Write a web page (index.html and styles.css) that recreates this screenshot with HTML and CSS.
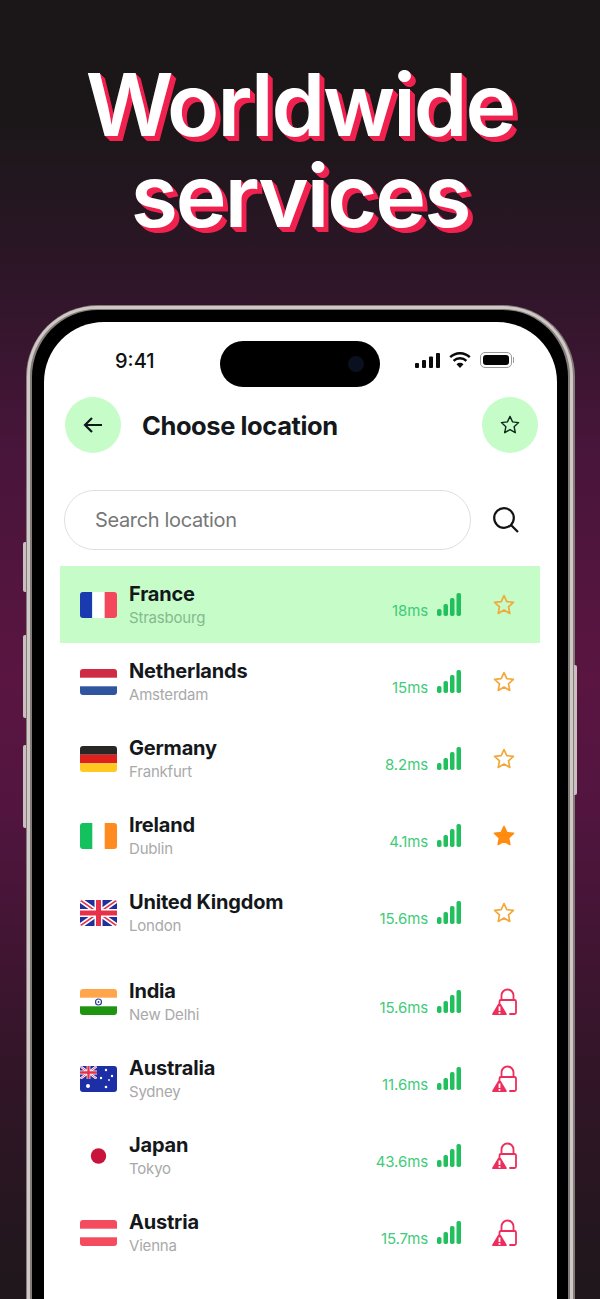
FILE: index.html
```html
<!DOCTYPE html>
<html>
  <head>
    <meta charset="utf-8">
    <link rel="stylesheet" href="styles.css">
    <title>Worldwide services</title>
  </head>
  <body>
    <svg class="sprite" width="0" height="0">
      <symbol id="star" viewBox="0 0 24 24">
        <path d="M12 2.600l2.800 6 6.600.8-4.900 4.500 1.300 6.500-5.800-3.300-5.800 3.300 1.300-6.500-4.900-4.500 6.600-.8z" stroke-linejoin="round"/>
      </symbol>
      <symbol id="lock" viewBox="0 0 26 28">
        <path d="M10.500 12V7.500a6 6 0 0 1 12 0V12" fill="none" stroke="currentColor" stroke-width="1.800"/>
        <path d="M8.500 14.500V13.500q0-1.500 1.500-1.500h13.500q1.500 0 1.500 1.500v11q0 1.500-1.500 1.500H19" fill="none" stroke="currentColor" stroke-width="1.800" stroke-linecap="round"/>
        <path d="M8.500 15q.8 0 1.200.8l6 10q.5 1.200-.8 1.200H2q-1.300 0-.8-1.200l6-10q.4-.8 1.300-.8z" fill="currentColor"/>
        <rect x="7.600" y="18.500" width="1.800" height="4.500" fill="#fff"/>
        <rect x="7.600" y="24" width="1.800" height="1.800" fill="#fff"/>
      </symbol>
      <symbol id="bars" viewBox="0 0 24 23">
        <rect class="b1" x="0" y="16" width="4.500" height="7" rx="1.800"/>
        <rect class="b2" x="6.500" y="11" width="4.500" height="12" rx="1.800"/>
        <rect class="b3" x="13" y="5" width="4.500" height="18" rx="1.800"/>
        <rect class="b4" x="19.500" y="0" width="4.500" height="23" rx="1.800"/>
      </symbol>
      <symbol id="union" viewBox="0 0 37 26">
        <rect width="37" height="26" fill="#1f2f9e"/>
        <path d="M0 0L37 26M37 0L0 26" stroke="#fff" stroke-width="5"/>
        <path d="M0 0L37 26M37 0L0 26" stroke="#e8304a" stroke-width="1.600"/>
        <path d="M18.500 0V26M0 13H37" stroke="#fff" stroke-width="8"/>
        <path d="M18.500 0V26M0 13H37" stroke="#e8304a" stroke-width="5"/>
      </symbol>
    </svg>

    <div class="hero">
      <h1>Worldwide<br>services</h1>
    </div>

    <div class="phone">
      <span class="side-btn btn-a"></span>
      <span class="side-btn btn-b"></span>
      <span class="side-btn btn-c"></span>
      <span class="side-btn btn-d"></span>
      <div class="screen">
        <div class="status">
          <span class="time">9:41</span>
          <div class="island"><span class="camera"></span></div>
          <div class="status-icons">
            <svg width="25" height="15" viewBox="0 0 25 15" fill="#0b0b0b">
              <rect x="0" y="10" width="4" height="5" rx="1"/>
              <rect x="7" y="7" width="4" height="8" rx="1"/>
              <rect x="14" y="3.500" width="4" height="11.500" rx="1"/>
              <rect x="21" y="0" width="4" height="15" rx="1"/>
            </svg>
            <svg width="22" height="16" viewBox="0 0 22 16" fill="none" stroke="#0b0b0b" stroke-width="2.400">
              <path d="M1.200 5.200a14 14 0 0 1 19.600 0"/>
              <path d="M4.600 8.800a9.200 9.200 0 0 1 12.800 0"/>
              <path d="M11 16l-3.500-3.700a5 5 0 0 1 7 0z" fill="#0b0b0b" stroke="none"/>
            </svg>
            <div class="battery"><span></span></div>
          </div>
        </div>

        <div class="top-bar">
          <div class="round-btn">
            <svg width="20" height="18" viewBox="0 0 20 18" fill="none" stroke="#11181c" stroke-width="2.200">
              <path d="M19 9H2M9 2L2 9l7 7"/>
            </svg>
          </div>
          <div class="title">Choose location</div>
          <div class="round-btn">
            <svg class="star-head" width="22" height="22"><use href="#star"/></svg>
          </div>
        </div>

        <div class="search-row">
          <div class="search-box">Search location</div>
          <svg width="26" height="26" viewBox="0 0 26 26" fill="none" stroke="#111" stroke-width="2.200">
            <circle cx="11" cy="11" r="9.800"/>
            <path d="M18 18l7 7"/>
          </svg>
        </div>

        <div class="list">
          <div class="row active">
            <svg class="flag" viewBox="0 0 37 26"><rect width="12.300" height="26" fill="#1a3ab0"/><rect x="12.300" width="12.400" height="26" fill="#fff"/><rect x="24.700" width="12.300" height="26" fill="#f4475c"/></svg>
            <div class="info"><div class="name">France</div><div class="city">Strasbourg</div></div>
            <span class="ms">18ms</span>
            <svg class="signal"><use href="#bars"/></svg>
            <div class="action"><svg class="star"><use href="#star"/></svg></div>
          </div>
          <div class="row">
            <svg class="flag" viewBox="0 0 37 26"><rect width="37" height="8.700" fill="#cf2b44"/><rect y="17.300" width="37" height="8.700" fill="#2f559f"/></svg>
            <div class="info"><div class="name">Netherlands</div><div class="city">Amsterdam</div></div>
            <span class="ms">15ms</span>
            <svg class="signal"><use href="#bars"/></svg>
            <div class="action"><svg class="star"><use href="#star"/></svg></div>
          </div>
          <div class="row">
            <svg class="flag" viewBox="0 0 37 26"><rect width="37" height="8.700" fill="#2a2626"/><rect y="8.700" width="37" height="8.600" fill="#e0201c"/><rect y="17.300" width="37" height="8.700" fill="#ffc91f"/></svg>
            <div class="info"><div class="name">Germany</div><div class="city">Frankfurt</div></div>
            <span class="ms">8.2ms</span>
            <svg class="signal two"><use href="#bars"/></svg>
            <div class="action"><svg class="star"><use href="#star"/></svg></div>
          </div>
          <div class="row">
            <svg class="flag" viewBox="0 0 37 26"><rect width="12.300" height="26" fill="#13c25f"/><rect x="24.700" width="12.300" height="26" fill="#ff8a1f"/></svg>
            <div class="info"><div class="name">Ireland</div><div class="city">Dublin</div></div>
            <span class="ms">4.1ms</span>
            <svg class="signal two"><use href="#bars"/></svg>
            <div class="action"><svg class="star filled"><use href="#star"/></svg></div>
          </div>
          <div class="row">
            <svg class="flag"><use href="#union"/></svg>
            <div class="info"><div class="name">United Kingdom</div><div class="city">London</div></div>
            <span class="ms">15.6ms</span>
            <svg class="signal"><use href="#bars"/></svg>
            <div class="action"><svg class="star"><use href="#star"/></svg></div>
          </div>
        </div>

        <div class="list locked">
          <div class="row">
            <svg class="flag" viewBox="0 0 37 26"><rect width="37" height="8.700" fill="#ffa64d"/><rect y="17.300" width="37" height="8.700" fill="#1e9410"/><circle cx="18.500" cy="13" r="3" fill="none" stroke="#2b3f97" stroke-width="1.200"/><circle cx="18.500" cy="13" r=".9" fill="#2b3f97"/></svg>
            <div class="info"><div class="name">India</div><div class="city">New Delhi</div></div>
            <span class="ms">15.6ms</span>
            <svg class="signal"><use href="#bars"/></svg>
            <div class="action"><svg class="lock"><use href="#lock"/></svg></div>
          </div>
          <div class="row">
            <svg class="flag" viewBox="0 0 37 26">
              <rect width="37" height="26" fill="#1c2fa6"/>
              <svg width="17" height="13" viewBox="0 0 37 26" preserveAspectRatio="none"><use href="#union"/></svg>
              <g fill="#fff">
                <circle cx="8" cy="20" r="2"/><circle cx="26" cy="4" r="1.200"/><circle cx="21" cy="12" r="1.200"/><circle cx="32" cy="10" r="1.200"/><circle cx="29" cy="14" r=".9"/><circle cx="26" cy="21" r="1.300"/>
              </g>
            </svg>
            <div class="info"><div class="name">Australia</div><div class="city">Sydney</div></div>
            <span class="ms">11.6ms</span>
            <svg class="signal"><use href="#bars"/></svg>
            <div class="action"><svg class="lock"><use href="#lock"/></svg></div>
          </div>
          <div class="row">
            <svg class="flag" viewBox="0 0 37 26"><circle cx="18.500" cy="13" r="7.700" fill="#c8143c"/></svg>
            <div class="info"><div class="name">Japan</div><div class="city">Tokyo</div></div>
            <span class="ms">43.6ms</span>
            <svg class="signal"><use href="#bars"/></svg>
            <div class="action"><svg class="lock"><use href="#lock"/></svg></div>
          </div>
          <div class="row">
            <svg class="flag" viewBox="0 0 37 26"><rect width="37" height="8.700" fill="#f44b5f"/><rect y="17.300" width="37" height="8.700" fill="#f44b5f"/></svg>
            <div class="info"><div class="name">Austria</div><div class="city">Vienna</div></div>
            <span class="ms">15.7ms</span>
            <svg class="signal"><use href="#bars"/></svg>
            <div class="action"><svg class="lock"><use href="#lock"/></svg></div>
          </div>
        </div>
      </div>
    </div>
  </body>
</html>
```

FILE: styles.css
```css
html, body {
  margin: 0;
  padding: 0;
}
body {
  width: 600px;
  height: 1299px;
  overflow: hidden;
  font-family: Inter, "Liberation Sans", sans-serif;
  background:
    linear-gradient(180deg, #1b1719 0, #1b1719 120px, #2a1625 250px, #48153a 450px, #5a1541 680px, #531540 800px, #331528 1060px, #1e171b 1299px);
}
.sprite {
  position: absolute;
}

.hero {
  height: 305px;
  box-sizing: border-box;
  padding-top: 60px;
}
h1 {
  margin: 0;
  text-align: center;
  color: #fff;
  font-size: 86px;
  font-weight: 600;
  line-height: 91px;
  letter-spacing: -2px;
  text-shadow: 1px 1px 0 #f0224f, 2px 2px 0 #f0224f, 3px 3px 0 #f0224f, 4px 4px 0 #f0224f, 5px 5px 0 #f0224f;
}

.phone {
  position: relative;
  width: 549px;
  height: 994px;
  margin-left: 26px;
  box-sizing: border-box;
  border: solid #827c7a;
  border-width: 5px 7px 0 6px;
  border-radius: 72px 72px 0 0;
  background: #000;
}
/* bright line running along the metal edge */
.phone::before {
  content: "";
  position: absolute;
  top: -4px;
  left: -5px;
  right: -5px;
  bottom: 0;
  border: solid #cfc8c5;
  border-width: 3px 3px 0 3px;
  border-radius: 70px 70px 0 0;
}
.side-btn {
  position: absolute;
  left: -9px;
  width: 3px;
  background: #c9bfc0;
  border-radius: 2px 0 0 2px;
}
.btn-a { top: 232px; height: 50px; }
.btn-b { top: 325px; height: 83px; }
.btn-c { top: 435px; height: 83px; }
.btn-d {
  left: auto;
  right: -9px;
  top: 355px;
  height: 130px;
  border-radius: 0 2px 2px 0;
}

.screen {
  margin: 12px 11px 0 12px;
  height: 977px;
  background: #fff;
  border-radius: 60px 60px 0 0;
  overflow: hidden;
}

.status {
  height: 75px;
  display: flex;
  align-items: flex-start;
  padding-top: 19px;
  box-sizing: border-box;
}
.time {
  width: 176px;
  padding-left: 71px;
  box-sizing: border-box;
  margin-top: 8px;
  font-size: 20px;
  line-height: 24px;
  font-weight: 500;
  color: #111;
}
.island {
  width: 160px;
  height: 46px;
  border-radius: 23px;
  background: #000;
  position: relative;
}
.camera {
  position: absolute;
  right: 16px;
  top: 15px;
  width: 16px;
  height: 16px;
  border-radius: 50%;
  background: #0b1020;
}
.status-icons {
  display: flex;
  align-items: center;
  gap: 9px;
  margin: 11px 0 0 35px;
}
.battery {
  position: relative;
  width: 32px;
  height: 16px;
  box-sizing: border-box;
  border: 1px solid #999;
  border-radius: 5px;
  padding: 2px;
}
.battery span {
  display: block;
  height: 100%;
  border-radius: 3px;
  background: #050505;
}
.battery::after {
  content: "";
  position: absolute;
  right: -3px;
  top: 4px;
  width: 1px;
  height: 6px;
  background: #999;
}

.top-bar {
  display: flex;
  align-items: center;
  padding: 0 19px 0 21px;
}
.round-btn {
  width: 56px;
  height: 56px;
  border-radius: 50%;
  background: #c5fcc8;
  display: flex;
  align-items: center;
  justify-content: center;
}
.title {
  flex: 1;
  margin-left: 21px;
  font-size: 25.500px;
  font-weight: 700;
  letter-spacing: -.42px;
  color: #14181b;
}
.star-head {
  fill: none;
  stroke: #0e2a1a;
  stroke-width: 1.500;
}

.search-row {
  display: flex;
  align-items: center;
  margin-top: 37px;
  padding-left: 20px;
  gap: 22px;
}
.search-box {
  width: 407px;
  height: 60px;
  box-sizing: border-box;
  border: 1.500px solid #dfdfdf;
  border-radius: 30px;
  padding-left: 30px;
  font-size: 20px;
  line-height: 59px;
  letter-spacing: -.35px;
  color: #777;
}

.list {
  margin: 16px 17px 0 16px;
}
.list.locked {
  margin-top: 12px;
}
.row {
  height: 77px;
  display: flex;
  align-items: center;
  padding: 0 22px 0 20px;
}
.row.active {
  background: #c5fcc8;
}
.flag {
  width: 37px;
  height: 26px;
  border-radius: 3px;
  flex: none;
}
.info {
  flex: 1;
  margin-left: 12px;
}
.name {
  font-size: 20px;
  line-height: 26px;
  font-weight: 700;
  letter-spacing: -.2px;
  color: #14181b;
}
.city {
  font-size: 15px;
  line-height: 22px;
  letter-spacing: -.2px;
  color: #a9a9a9;
}
.active .city {
  color: #86b98f;
}
.ms {
  margin-top: 12px;
  font-size: 15px;
  letter-spacing: -.1px;
  color: #3fcb79;
}
.signal {
  width: 24px;
  height: 23px;
  margin-left: 9px;
  fill: #22bf5f;
}
.signal.two .b3,
.signal.two .b4 {
  fill: #c5fcc8;
}
.action {
  width: 28px;
  margin-left: 29px;
  display: flex;
  justify-content: center;
}
.star {
  width: 24px;
  height: 24px;
  fill: none;
  stroke: #f2a83a;
  stroke-width: 1.700;
}
.star.filled {
  fill: #ff8c0f;
  stroke: #ff8c0f;
}
.lock {
  width: 26px;
  height: 28px;
  color: #ee2d5c;
}
```
